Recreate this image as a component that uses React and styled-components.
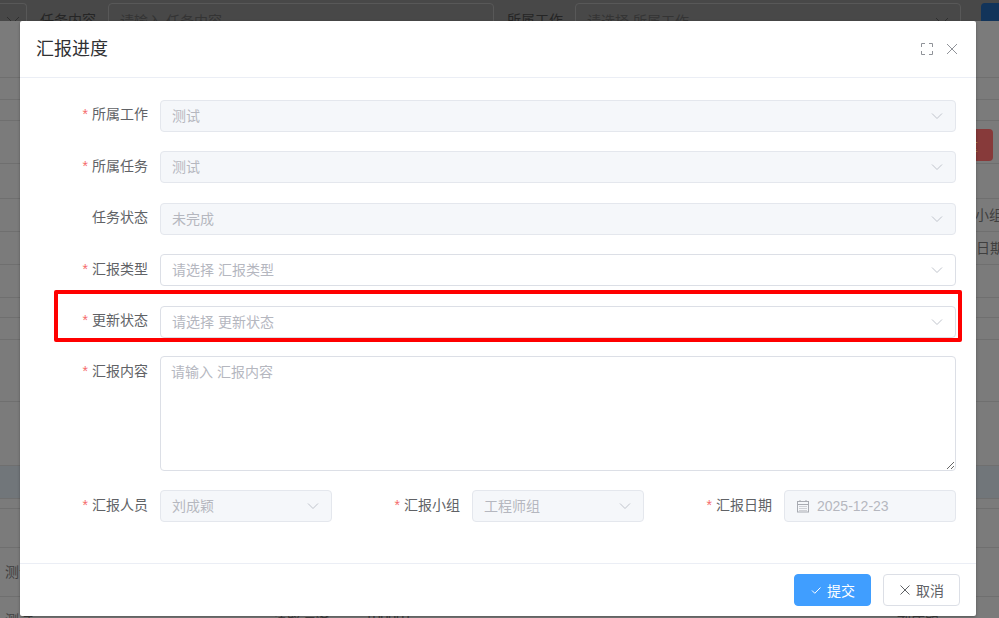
import styled, { createGlobalStyle } from "styled-components";

const GlobalStyle = createGlobalStyle`
  html, body {
    margin: 0;
    padding: 0;
    background: #7b7b7b;
  }
  * {
    box-sizing: border-box;
  }
`;

const fontStack = `"Liberation Sans", "Noto Sans CJK SC", sans-serif`;

const backdropRows = [
  { height: 57 },
  { height: 22 },
  { height: 21 },
  { height: 43, action: true },
  { height: 35 },
  { height: 33, text: "汇报小组", offset: 947 },
  { height: 33, text: "汇报日期", offset: 948 },
  { height: 33 },
  { height: 20 },
  { height: 22 },
  { height: 62 },
  { height: 64 },
  { height: 33, active: true },
  { height: 10 },
  { height: 39 },
  { height: 49, text: "测试", offset: 5 },
];

const App = () => {
  return (
    <>
      <GlobalStyle />
      <Screen>
        <TopBand>
          <BandSelect $width={27} $radius="0 4px 4px 0">
            <BandChevron />
          </BandSelect>
          <BandLabel $left={13}>任务内容</BandLabel>
          <BandInput $left={12} $width={386}>
            请输入 任务内容
          </BandInput>
          <BandLabel $left={13}>所属工作</BandLabel>
          <BandInput $left={12} $width={386}>
            请选择 所属工作
            <BandChevron />
          </BandInput>
          <BandButton />
        </TopBand>
        <BackdropTable>
          {backdropRows.map((row, i) => (
            <BackdropRow key={i} $height={row.height} $active={row.active}>
              {row.text && <BackdropText $offset={row.offset}>{row.text}</BackdropText>}
              {row.action && (
                <DangerButton>
                  <span>重</span>
                </DangerButton>
              )}
            </BackdropRow>
          ))}
          <LastRow>
            <LastCell $width={268}>测试</LastCell>
            <LastCell $width={92}>道路运输</LastCell>
            <LastCell $width={532}>100001</LastCell>
            <LastCell $width={60}>刘成颖</LastCell>
          </LastRow>
        </BackdropTable>

        <Dialog>
          <DialogHeader>
            <DialogTitle>汇报进度</DialogTitle>
            <HeaderTools>
              <svg width="12" height="12" viewBox="0 0 12 12" fill="none" stroke="#909399" strokeWidth="1">
                <path d="M.5 4V.5H4M8 .5h3.5V4M11.5 8v3.5H8M4 11.5H.5V8" />
              </svg>
              <svg width="10" height="10" viewBox="0 0 10 10" fill="none" stroke="#909399" strokeWidth="1">
                <path d="M0 0l10 10M10 0L0 10" />
              </svg>
            </HeaderTools>
          </DialogHeader>

          <DialogBody>
            <FormRow $gap={19}>
              <FieldLabel $required>所属工作</FieldLabel>
              <SelectBox $disabled>
                <span>测试</span>
                <Chevron />
              </SelectBox>
            </FormRow>
            <FormRow $gap={20}>
              <FieldLabel $required $nudge={1}>所属任务</FieldLabel>
              <SelectBox $disabled>
                <span>测试</span>
                <Chevron />
              </SelectBox>
            </FormRow>
            <FormRow $gap={19}>
              <FieldLabel>任务状态</FieldLabel>
              <SelectBox $disabled>
                <span>未完成</span>
                <Chevron />
              </SelectBox>
            </FormRow>
            <FormRow $gap={20}>
              <FieldLabel $required $nudge={1}>汇报类型</FieldLabel>
              <SelectBox>
                <span>请选择 汇报类型</span>
                <Chevron />
              </SelectBox>
            </FormRow>
            <FormRow $gap={18}>
              <FieldLabel $required>更新状态</FieldLabel>
              <SelectBox>
                <span>请选择 更新状态</span>
                <Chevron />
              </SelectBox>
              <Highlight />
            </FormRow>
            <FormRow $gap={19}>
              <FieldLabel $required $nudge={1}>汇报内容</FieldLabel>
              <TextArea placeholder="请输入 汇报内容" readOnly />
            </FormRow>
            <ThreeColumns>
              <FormRow>
                <FieldLabel $required $nudge={1}>汇报人员</FieldLabel>
                <SelectBox $disabled>
                  <span>刘成颖</span>
                  <Chevron />
                </SelectBox>
              </FormRow>
              <FormRow>
                <FieldLabel $required $nudge={1}>汇报小组</FieldLabel>
                <SelectBox $disabled>
                  <span>工程师组</span>
                  <Chevron />
                </SelectBox>
              </FormRow>
              <FormRow>
                <FieldLabel $required $nudge={1}>汇报日期</FieldLabel>
                <DateBox>
                  <svg width="14" height="14" viewBox="0 0 14 14" fill="none" stroke="#a8abb2" strokeWidth="1">
                    <rect x="1.5" y="2.5" width="11" height="10.5" />
                    <path d="M1.5 5.5h11M4 1v2M10 1v2" />
                    <path d="M3.5 7.5h7M3.5 9.5h7M3.5 11.5h7" strokeDasharray="1 1" />
                  </svg>
                  <span>2025-12-23</span>
                </DateBox>
              </FormRow>
            </ThreeColumns>
          </DialogBody>

          <DialogFooter>
            <FooterButton $primary>
              <svg width="12" height="12" viewBox="0 0 12 12" fill="none" stroke="#fff" strokeWidth="1">
                <path d="M2 6.5l2.8 2.8L10.5 3.5" />
              </svg>
              提交
            </FooterButton>
            <FooterButton>
              <svg width="12" height="12" viewBox="0 0 12 12" fill="none" stroke="#606266" strokeWidth="1">
                <path d="M1.5 1.5l9 9M10.5 1.5l-9 9" />
              </svg>
              取消
            </FooterButton>
          </DialogFooter>
        </Dialog>
      </Screen>
    </>
  );
};

export default App;

const Chevron = () => (
  <svg width="12" height="8" viewBox="0 0 12 8" fill="none" stroke="#c0c4cc" strokeWidth="1">
    <path d="M1 1.5l5 5 5-5" />
  </svg>
);

const BandChevron = () => (
  <svg width="14" height="8" viewBox="0 0 14 8" fill="none" stroke="#2f2f2f" strokeWidth="1">
    <path d="M1 1l6 6 6-6" />
  </svg>
);

const Screen = styled.div`
  position: relative;
  width: 999px;
  height: 618px;
  overflow: hidden;
  background: #7b7b7b;
  font-family: ${fontStack};
`;

const TopBand = styled.div`
  display: flex;
  align-items: flex-start;
  height: 21px;
  padding-top: 3px;
  overflow: hidden;
  background: #484848;
`;

const BandSelect = styled.div`
  display: flex;
  justify-content: center;
  flex: none;
  width: ${(p) => p.$width}px;
  height: 32px;
  padding-top: 12px;
  border: 1px solid #585858;
  border-left: none;
  border-radius: ${(p) => p.$radius};
`;

const BandLabel = styled.span`
  flex: none;
  margin-left: ${(p) => p.$left}px;
  padding-top: 7px;
  font-size: 14px;
  line-height: 20px;
  color: #252525;
`;

const BandInput = styled.div`
  display: flex;
  justify-content: space-between;
  flex: none;
  width: ${(p) => p.$width}px;
  height: 32px;
  margin-left: ${(p) => p.$left}px;
  padding: 7px 11px;
  border: 1px solid #585858;
  border-radius: 4px;
  font-size: 14px;
  line-height: 20px;
  color: #343434;

  svg {
    margin-top: 6px;
  }
`;

const BandButton = styled.div`
  flex: none;
  width: 40px;
  height: 32px;
  margin-left: 20px;
  border-radius: 4px;
  background: #12345a;
`;

const BackdropTable = styled.div`
  display: flex;
  flex-direction: column;
`;

const BackdropRow = styled.div`
  display: flex;
  align-items: center;
  justify-content: flex-end;
  flex: none;
  height: ${(p) => p.$height}px;
  overflow: hidden;
  border-bottom: 1px solid #6f6f6f;
  background: ${(p) => (p.$active ? "#71767a" : "transparent")};
`;

const BackdropText = styled.span`
  flex: none;
  width: 999px;
  padding-left: ${(p) => p.$offset}px;
  padding-bottom: 2px;
  font-size: 14px;
  white-space: nowrap;
  color: #3f3f3f;
`;

const DangerButton = styled.div`
  display: flex;
  align-items: center;
  align-self: flex-start;
  flex: none;
  width: 33px;
  height: 32px;
  margin: 8px 6px 0 0;
  padding-left: 4px;
  border-radius: 4px;
  font-size: 14px;
  color: #b08a4a;
  background: #873a3a;
`;

const LastRow = styled.div`
  display: flex;
  padding: 12px 0 0 5px;
  font-size: 14px;
  color: #3f3f3f;
`;

const LastCell = styled.span`
  flex: none;
  width: ${(p) => p.$width}px;
`;

const Dialog = styled.div`
  position: absolute;
  top: 21px;
  left: 20px;
  display: flex;
  flex-direction: column;
  width: 956px;
  height: 595px;
  border-radius: 2px;
  background: #fff;
  box-shadow: 0 1px 3px rgba(0, 0, 0, 0.3);
`;

const DialogHeader = styled.div`
  display: flex;
  align-items: center;
  justify-content: space-between;
  flex: none;
  height: 57px;
  padding: 0 19px 1px 16px;
  border-bottom: 1px solid #ebeef5;
`;

const DialogTitle = styled.h2`
  margin: 0;
  font-size: 18px;
  font-weight: 400;
  line-height: 24px;
  color: #303133;
`;

const HeaderTools = styled.div`
  display: flex;
  align-items: center;
  gap: 14px;
`;

const DialogBody = styled.div`
  flex: 1;
  padding: 22px 20px 0;
`;

const FormRow = styled.div`
  position: relative;
  display: flex;
  align-items: flex-start;
  margin-bottom: ${(p) => p.$gap || 0}px;
`;

const FieldLabel = styled.label`
  flex: none;
  width: 120px;
  padding-top: ${(p) => p.$nudge || 0}px;
  padding-right: 12px;
  font-size: 14px;
  line-height: 28px;
  text-align: right;
  color: #606266;

  &::before {
    content: ${(p) => (p.$required ? '"*"' : "none")};
    margin-right: 4px;
    color: #f56c6c;
  }
`;

const SelectBox = styled.div`
  display: flex;
  align-items: center;
  justify-content: space-between;
  flex: 1;
  min-width: 0;
  height: 32px;
  padding: 0 12px 0 11px;
  border: 1px solid ${(p) => (p.$disabled ? "#e4e7ed" : "#dcdfe6")};
  border-radius: 4px;
  font-size: 14px;
  color: #b5b7bf;
  background: ${(p) => (p.$disabled ? "#f5f7fa" : "#fff")};

  span {
    margin-bottom: 2px;
  }
`;

const DateBox = styled.div`
  display: flex;
  align-items: center;
  gap: 7px;
  flex: 1;
  height: 32px;
  padding-left: 11px;
  border: 1px solid #e4e7ed;
  border-radius: 4px;
  font-size: 14px;
  color: #b5b7bf;
  background: #f5f7fa;
`;

const TextArea = styled.textarea`
  flex: 1;
  display: block;
  height: 115px;
  padding: 5px 10px;
  border: 1px solid #dcdfe6;
  border-radius: 4px;
  outline: none;
  font-family: ${fontStack};
  font-size: 14px;
  line-height: 21px;
  color: #606266;
  background: #fff;

  &::placeholder {
    color: #b5b7bf;
  }
`;

const ThreeColumns = styled.div`
  display: grid;
  grid-template-columns: repeat(3, 1fr);
  gap: 20px;
`;

const Highlight = styled.div`
  position: absolute;
  top: -16px;
  left: 14px;
  right: -6px;
  bottom: -4px;
  border: 4px solid #ff0000;
  border-radius: 2px;
  pointer-events: none;
`;

const DialogFooter = styled.div`
  display: flex;
  align-items: center;
  justify-content: flex-end;
  gap: 12px;
  flex: none;
  height: 53px;
  padding: 0 16px;
  border-top: 1px solid #ebeef5;
`;

const FooterButton = styled.button`
  display: flex;
  align-items: center;
  justify-content: center;
  gap: 5px;
  width: 77px;
  height: 32px;
  padding: 0;
  border: 1px solid ${(p) => (p.$primary ? "#409eff" : "#dcdfe6")};
  border-radius: 4px;
  font-family: ${fontStack};
  font-size: 14px;
  color: ${(p) => (p.$primary ? "#fff" : "#606266")};
  background: ${(p) => (p.$primary ? "#409eff" : "#fff")};
`;
